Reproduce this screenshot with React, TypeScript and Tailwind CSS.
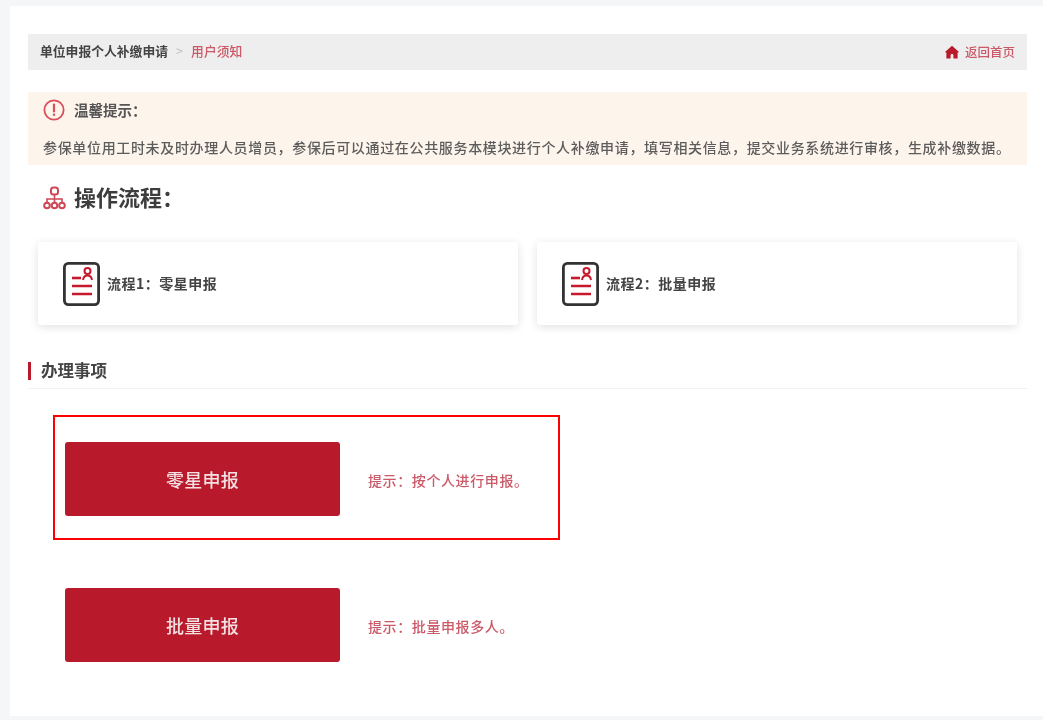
import React from "react";

const FONT = "font-['Noto_Sans_CJK_SC','Liberation_Sans',sans-serif]";

function HomeIcon() {
  return (
    <svg viewBox="0 0 14 14" className="w-[14px] h-[14px] text-[#b81a2b]" fill="currentColor">
      <path d="M7 0.8 L14 7 L12.6 7.8 L12.6 13.4 L8.4 13.4 L8.4 10.4 C8.4 8.6 5.6 8.6 5.6 10.4 L5.6 13.4 L1.4 13.4 L1.4 7.8 L0 7 Z" />
    </svg>
  );
}

function AlertIcon() {
  return (
    <svg viewBox="0 0 22 22" className="w-[22px] h-[22px] text-[#d9505c]" fill="none" stroke="currentColor">
      <circle cx="11" cy="11" r="9.6" strokeWidth="1.8" />
      <path d="M11 5.6 V12.4" strokeWidth="2.2" strokeLinecap="round" />
      <circle cx="11" cy="15.8" r="1.2" fill="currentColor" stroke="none" />
    </svg>
  );
}

function FlowIcon() {
  return (
    <svg viewBox="0 0 23 24" className="w-[23px] h-[24px] text-[#cf4655]" fill="none" stroke="currentColor" strokeWidth="2">
      <rect x="8" y="1.5" width="7" height="7" rx="2.5" />
      <path d="M11.5 8.5 V13 M4 17 V13 H19 V17 M11.5 13 V17" strokeWidth="1.6" />
      <circle cx="4" cy="19.5" r="2.8" />
      <circle cx="11.5" cy="19.5" r="2.8" />
      <circle cx="19" cy="19.5" r="2.8" />
    </svg>
  );
}

function FormIcon() {
  return (
    <svg viewBox="0 0 37 44" className="w-[37px] h-[44px] shrink-0" fill="none">
      <rect x="1.4" y="1.4" width="34.2" height="41.2" rx="4" stroke="#333333" strokeWidth="2.8" />
      <g stroke="#c8192c" strokeWidth="2.6">
        <path d="M9 16 H18" />
        <circle cx="24.5" cy="9" r="3" strokeWidth="2" />
        <path d="M20 18 C20.5 14.5 22.5 13.5 24.5 13.5 C26.5 13.5 28.5 14.5 29 18" strokeWidth="2" />
        <path d="M9 24 H29 M9 32 H29" />
      </g>
    </svg>
  );
}

function FlowCard({ label }: { label: string }) {
  return (
    <div className="flex-1 h-[83px] flex items-center pl-[25px] bg-white rounded-[3px] shadow-[0_2px_10px_rgba(0,0,0,0.12)]">
      <FormIcon />
      <span className="ml-[7px] text-[14px] tracking-[0.5px] font-bold text-[#444444]">{label}</span>
    </div>
  );
}

function ActionRow({ title, hint }: { title: string; hint: string }) {
  return (
    <div className="flex items-center">
      <button className="w-[275px] h-[74px] rounded-[3px] bg-[#b81a2b] text-[#f4dfe2] text-[18px] tracking-[0.3px] font-medium">
        {title}
      </button>
      <span className="ml-[28px] mt-[3px] text-[14px] tracking-[0.6px] font-medium text-[#cb5a69]">{hint}</span>
    </div>
  );
}

export default function App() {
  return (
    <div className={`${FONT} w-[1043px] h-[720px] overflow-hidden bg-[#f5f6f8] pt-[6px] pb-1 pl-[10px] blur-[0.7px]`}>
      <div className="h-[710px] bg-white pt-[28px] pl-[18px] pr-[16px]">
        {/* Breadcrumb */}
        <div className="h-[36px] flex items-center justify-between bg-[#eeeeee] pl-[12px] pr-[12px]">
          <div className="flex items-center mb-[2px] text-[12.8px]">
            <span className="font-bold text-[#444444]">单位申报个人补缴申请</span>
            <span className="ml-[8px] mr-[8px] text-[#b8bcc4]">&gt;</span>
            <span className="font-medium text-[#cb5a69]">用户须知</span>
          </div>
          <div className="flex items-center text-[12.5px] font-medium text-[#cb5a69]">
            <HomeIcon />
            <span className="ml-[6px]">返回首页</span>
          </div>
        </div>

        {/* Notice */}
        <div className="mt-[22px] h-[73px] bg-[#fdf4ec] pl-[15px]">
          <div className="h-[36px] flex items-center">
            <AlertIcon />
            <span className="ml-[9px] text-[14.5px] font-bold text-[#555555]">温馨提示：</span>
          </div>
          <p className="mt-[7px] text-[14px] leading-[24px] tracking-[0.66px] whitespace-nowrap font-medium text-[#5c5c5c]">
            参保单位用工时未及时办理人员增员，参保后可以通过在公共服务本模块进行个人补缴申请，填写相关信息，提交业务系统进行审核，生成补缴数据。
          </p>
        </div>

        {/* Flow */}
        <div className="mt-[19px] h-[28px] flex items-center pl-[15px]">
          <FlowIcon />
          <span className="ml-[8px] mb-[3px] text-[22px] font-bold text-[#3d3d3d]">操作流程：</span>
        </div>
        <div className="mt-[30px] ml-[10px] mr-[10px] flex gap-[19px]">
          <FlowCard label="流程1：零星申报" />
          <FlowCard label="流程2：批量申报" />
        </div>

        {/* Section */}
        <div className="mt-[34px] h-[30px] flex items-start border-b border-[#f2f2f2]">
          <div className="mt-[3px] w-[3px] h-[18px] bg-[#b81a2b]" />
          <span className="ml-[10px] text-[16.5px] leading-[22px] font-bold text-[#444444]">办理事项</span>
        </div>

        {/* Actions */}
        <div className="mt-[26px] ml-[25px] w-[507px] h-[125px] pt-[25px] pl-[10px] border-2 border-[#ff0000]">
          <ActionRow title="零星申报" hint="提示：按个人进行申报。" />
        </div>
        <div className="mt-[48px] ml-[37px]">
          <ActionRow title="批量申报" hint="提示：批量申报多人。" />
        </div>
      </div>
    </div>
  );
}
